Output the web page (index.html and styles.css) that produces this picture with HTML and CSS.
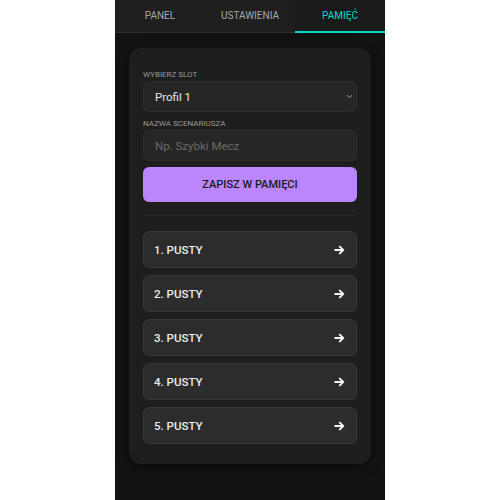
FILE: index.html
```html
<!DOCTYPE html>
<html lang="pl">
<head>
    <meta charset="UTF-8">
    <meta name="viewport" content="width=device-width, initial-scale=1.0">
    <title>Pamięć</title>
    <link rel="stylesheet" href="styles.css">
</head>
<body>
    <div class="app">
        <nav class="tabs">
            <div class="tab">PANEL</div>
            <div class="tab">USTAWIENIA</div>
            <div class="tab active">PAMIĘĆ</div>
        </nav>

        <main class="main">
            <div class="card">
                <label class="label">WYBIERZ SLOT</label>
                <div class="select-wrap">
                    <select class="control">
                        <option>Profil 1</option>
                        <option>Profil 2</option>
                        <option>Profil 3</option>
                    </select>
                    <svg class="chevron" width="7" height="5" viewBox="0 0 7 5">
                        <path d="M1 1.2 L3.5 3.6 L6 1.2" fill="none" stroke="#9a9a9a" stroke-width="1"/>
                    </svg>
                </div>

                <label class="label">NAZWA SCENARIUSZA</label>
                <input class="control" type="text" placeholder="Np. Szybki Mecz">

                <button class="save">ZAPISZ W PAMIĘCI</button>

                <div class="divider"></div>

                <div class="slots">
                    <div class="slot"><span>1. PUSTY</span><svg class="arrow" width="11" height="10" viewBox="0 0 11 10"><path d="M1.2 5 H9 M5.8 1.6 L9.2 5 L5.8 8.4" fill="none" stroke="#f4f4f4" stroke-width="2" stroke-linecap="round" stroke-linejoin="round"/></svg></div>
                    <div class="slot"><span>2. PUSTY</span><svg class="arrow" width="11" height="10" viewBox="0 0 11 10"><path d="M1.2 5 H9 M5.8 1.6 L9.2 5 L5.8 8.4" fill="none" stroke="#f4f4f4" stroke-width="2" stroke-linecap="round" stroke-linejoin="round"/></svg></div>
                    <div class="slot"><span>3. PUSTY</span><svg class="arrow" width="11" height="10" viewBox="0 0 11 10"><path d="M1.2 5 H9 M5.8 1.6 L9.2 5 L5.8 8.4" fill="none" stroke="#f4f4f4" stroke-width="2" stroke-linecap="round" stroke-linejoin="round"/></svg></div>
                    <div class="slot"><span>4. PUSTY</span><svg class="arrow" width="11" height="10" viewBox="0 0 11 10"><path d="M1.2 5 H9 M5.8 1.6 L9.2 5 L5.8 8.4" fill="none" stroke="#f4f4f4" stroke-width="2" stroke-linecap="round" stroke-linejoin="round"/></svg></div>
                    <div class="slot"><span>5. PUSTY</span><svg class="arrow" width="11" height="10" viewBox="0 0 11 10"><path d="M1.2 5 H9 M5.8 1.6 L9.2 5 L5.8 8.4" fill="none" stroke="#f4f4f4" stroke-width="2" stroke-linecap="round" stroke-linejoin="round"/></svg></div>
                </div>
            </div>
        </main>
    </div>
</body>
</html>
```

FILE: styles.css
```css
body {
    margin: 0;
    background: #ffffff;
    font-family: Roboto, 'Noto Sans', sans-serif;
    display: flex;
    justify-content: center;
}
.app {
    width: 270px;
    min-height: 100vh;
    background: #121212;
}
.tabs {
    display: grid;
    grid-template-columns: repeat(3, 1fr);
    height: 33px;
    background: #1f1f1f;
    border-bottom: 1px solid #2f2f2f;
    box-sizing: border-box;
}
.tab {
    display: flex;
    align-items: center;
    justify-content: center;
    font-size: 10px;
    color: #a8a8a8;
    padding-bottom: 2px;
}
.tab.active {
    color: #03dac6;
    background: #1a1a1a;
    border-bottom: 2px solid #03dac6;
    margin-bottom: -1px;
    padding-bottom: 1px;
}
.main {
    padding: 15px 14px;
}
.card {
    background: #1e1e1e;
    border-radius: 12px;
    padding: 22px 14px 20px;
    box-shadow: 0 4px 12px rgba(0,0,0,0.35);
    display: flex;
    flex-direction: column;
}
.label {
    font-size: 8px;
    line-height: 10px;
    color: #9a9a9a;
    margin-bottom: 1px;
}
.select-wrap {
    position: relative;
    margin-bottom: 7px;
}
.control {
    display: block;
    width: 100%;
    height: 31px;
    box-sizing: border-box;
    background: #262626;
    border: 1px solid #2e2e2e;
    border-radius: 6px;
    color: #e6e6e6;
    font-family: Roboto, 'Noto Sans', sans-serif;
    font-size: 11.5px;
    padding: 0 11px;
    outline: none;
    -webkit-appearance: none;
    appearance: none;
}
.control::placeholder {
    color: #6a6a6a;
}
.chevron {
    position: absolute;
    right: 4px;
    top: 13px;
}
.save {
    margin-top: 6px;
    height: 35px;
    border: none;
    border-radius: 6px;
    background: #bb86fc;
    color: #1a1a1a;
    font-family: Roboto, 'Noto Sans', sans-serif;
    font-size: 11px;
    font-weight: 500;
    cursor: pointer;
}
.divider {
    height: 1px;
    background: #272727;
    margin: 13px 0 15px;
}
.slots {
    display: flex;
    flex-direction: column;
    gap: 7px;
}
.slot {
    height: 37px;
    box-sizing: border-box;
    background: #2c2c2c;
    border: 1px solid #363636;
    border-radius: 6px;
    display: flex;
    align-items: center;
    justify-content: space-between;
    padding: 0 11px 0 10px;
    color: #ececec;
    font-size: 11.5px;
    font-weight: 500;
}
```
